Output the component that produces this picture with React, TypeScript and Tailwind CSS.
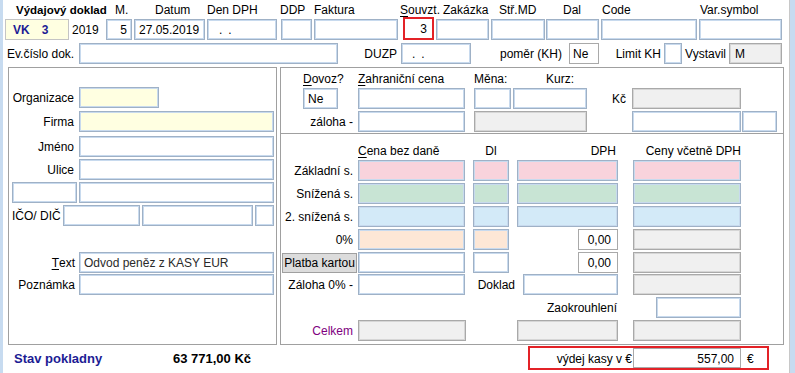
import type { ReactNode } from 'react';

const edge = 'border border-[#9fb1c6] shadow-[inset_0_0_0_1px_#c8daee]';

const tones = {
  input: `bg-white ${edge}`,
  yellow: `bg-[#ffffe1] ${edge}`,
  pink: `bg-[#f9d3dc] ${edge}`,
  green: `bg-[#c8e4d4] ${edge}`,
  sky: `bg-[#d3eaf8] ${edge}`,
  peach: `bg-[#fde7d6] ${edge}`,
  gray: 'bg-[#f0f0f0] border border-[#a9a9a9] shadow-[inset_0_0_0_1px_#d6d6d6]',
  plain: 'bg-white border border-[#a9a9a9]',
  vk: 'bg-[#ffffe1] border border-[#c4c4c4]',
};

function Box({
  className = '',
  tone = 'input',
  h = 'h-[21px]',
  children,
}: {
  className?: string;
  tone?: keyof typeof tones;
  h?: string;
  children?: ReactNode;
}) {
  return (
    <div className={`flex shrink-0 items-center whitespace-nowrap pt-[1px] ${h} ${tones[tone]} ${className}`}>
      {children}
    </div>
  );
}

function Label({ className = '', children }: { className?: string; children?: ReactNode }) {
  return <div className={`flex h-full shrink-0 items-center whitespace-nowrap pt-[1px] ${className}`}>{children}</div>;
}

function Row({ className = '', children }: { className?: string; children?: ReactNode }) {
  return <div className={`flex h-[21px] shrink-0 items-center ${className}`}>{children}</div>;
}

export default function App() {
  return (
    <div className="flex h-[373px] w-[795px] overflow-hidden bg-white font-['Liberation_Sans',Arial,sans-serif] text-[12px] leading-[14px] text-black">
      <div className="w-[3px] shrink-0 bg-[#c7dbf0]" />

      <div className="flex w-[786px] shrink-0 flex-col pt-[3px]">
        {/* header labels */}
        <div className="flex h-[14px] shrink-0 items-center whitespace-nowrap">
          <span className="ml-[13px] w-[99px] shrink-0 text-[11.5px] font-bold">Výdajový doklad</span>
          <span className="w-[40px] shrink-0">M.</span>
          <span className="w-[52px] shrink-0">Datum</span>
          <span className="w-[73px] shrink-0">Den DPH</span>
          <span className="w-[34px] shrink-0">DDP</span>
          <span className="w-[86px] shrink-0">Faktura</span>
          <span className="w-[43px] shrink-0">
            <u className="underline-offset-2">S</u>ouvzt.
          </span>
          <span className="w-[56px] shrink-0">Zakázka</span>
          <span className="w-[64px] shrink-0">Stř.MD</span>
          <span className="w-[39px] shrink-0">Dal</span>
          <span className="w-[98px] shrink-0">Code</span>
          <span className="shrink-0">Var.symbol</span>
        </div>

        {/* header inputs */}
        <div className="mt-[2px] flex h-[21px] shrink-0 items-start">
          <Box tone="vk" className="ml-[2px] w-[64px] font-bold text-[#1c1c94]">
            <span className="ml-[7px]">VK</span>
            <span className="ml-[12px]">3</span>
          </Box>
          <Label className="w-[37px] pl-[3px]">2019</Label>
          <Box className="w-[26px] justify-end pr-[4px]">5</Box>
          <Box className="ml-[2px] w-[71px] pl-[4px]">27.05.2019</Box>
          <Box className="ml-[2px] w-[70px]">
            <span className="ml-[11px]">.</span>
            <span className="ml-[6px]">.</span>
          </Box>
          <Box className="ml-[4px] w-[31px]" />
          <Box className="ml-[2px] w-[84px]" />
          <div className="-mt-[2px] ml-[5px] flex h-[23px] w-[31px] shrink-0 items-center justify-end border-2 border-[#e32227] bg-white pr-[5px] pt-[1px]">
            3
          </div>
          <Box className="ml-[2px] w-[53px]" />
          <Box className="ml-[2px] w-[54px]" />
          <Box className="ml-[1px] w-[53px]" />
          <Box className="ml-[2px] w-[96px]" />
          <Box className="ml-[2px] w-[83px]" />
        </div>

        {/* second header line */}
        <Row className="mt-[3px]">
          <Label className="w-[76px] pl-[4px]">Ev.číslo dok.</Label>
          <Box className="w-[259px]" />
          <Label className="w-[63px] justify-end pr-[4px]">DUZP</Label>
          <Box className="w-[70px]">
            <span className="ml-[10px]">.</span>
            <span className="ml-[6px]">.</span>
          </Box>
          <Label className="w-[98px] justify-end pr-[7px]">poměr (KH)</Label>
          <Box tone="plain" className="w-[30px] pl-[3px]">
            Ne
          </Box>
          <Label className="w-[65px] justify-end pr-[3px]">Limit KH</Label>
          <Box className="w-[18px]" />
          <Label className="w-[47px] justify-end pr-[3px]">Vystavil</Label>
          <Box tone="gray" className="w-[53px] pl-[5px]">
            M
          </Box>
        </Row>

        {/* panels */}
        <div className="mt-[3px] flex h-[278px] shrink-0">
          {/* partner */}
          <div className="ml-[5px] flex w-[269px] shrink-0 flex-col border border-[#a0a0a0]">
            <Row className="mt-[19px]">
              <Label className="w-[70px] justify-end pr-[5px]">Organizace</Label>
              <Box tone="yellow" className="w-[80px]" />
            </Row>
            <Row className="mt-[3px]">
              <Label className="w-[70px] justify-end pr-[5px]">Firma</Label>
              <Box tone="yellow" className="w-[195px]" />
            </Row>
            <Row className="mt-[4px]">
              <Label className="w-[70px] justify-end pr-[5px]">Jméno</Label>
              <Box className="w-[195px]" />
            </Row>
            <Row className="mt-[2px]">
              <Label className="w-[70px] justify-end pr-[5px]">Ulice</Label>
              <Box className="w-[195px]" />
            </Row>
            <Row className="mt-[2px]">
              <Box className="ml-[3px] w-[65px]" />
              <Box className="ml-[2px] w-[195px]" />
            </Row>
            <Row className="mt-[2px]">
              <Label className="ml-[3px] w-[51px]">IČO/ DIČ</Label>
              <Box className="w-[77px]" />
              <Box className="ml-[2px] w-[111px]" />
              <Box className="ml-[2px] w-[19px]" />
            </Row>
            <Row className="mt-[26px]">
              <Label className="w-[70px] justify-end pr-[4px]">
                <u className="underline-offset-2">T</u>ext
              </Label>
              <Box className="w-[195px] pl-[4px] text-[#2a2a2a]">Odvod peněz z KASY EUR</Box>
            </Row>
            <Row className="mt-[1px]">
              <Label className="w-[70px] justify-end pr-[4px]">Poznámka</Label>
              <Box className="w-[195px]" />
            </Row>
          </div>

          {/* amounts */}
          <div className="ml-[3px] flex w-[504px] shrink-0 flex-col border border-[#a0a0a0]">
            <div className="flex h-[66px] shrink-0 flex-col border-b border-[#a0a0a0]">
              <div className="mt-[4px] flex h-[14px] shrink-0 items-center whitespace-nowrap">
                <span className="ml-[22px] w-[55px] shrink-0">
                  <u className="underline-offset-2">D</u>ovoz?
                </span>
                <span className="w-[116px] shrink-0">
                  <u className="underline-offset-2">Z</u>ahraniční cena
                </span>
                <span className="w-[72px] shrink-0">Měna:</span>
                <span className="shrink-0">Kurz:</span>
              </div>
              <Row className="mt-[2px]">
                <Box className="ml-[22px] w-[35px] pl-[4px]">Ne</Box>
                <Box className="ml-[20px] w-[107px]" />
                <Box className="ml-[9px] w-[37px]" />
                <Box className="ml-[2px] w-[74px]" />
                <Label className="w-[45px] justify-end pr-[6px]">Kč</Label>
                <Box tone="gray" className="w-[109px]" />
              </Row>
              <Row className="mt-[2px]">
                <Label className="w-[77px] justify-end pr-[5px]">záloha -</Label>
                <Box className="w-[107px]" />
                <Box tone="gray" className="ml-[9px] w-[113px]" />
                <Box className="ml-[45px] w-[109px]" />
                <Box className="ml-[1px] w-[35px]" />
              </Row>
            </div>

            <div className="mt-[10px] flex h-[14px] shrink-0 items-center whitespace-nowrap">
              <span className="ml-[77px] w-[115px] shrink-0">
                <u className="underline-offset-2">C</u>ena bez daně
              </span>
              <span className="w-[36px] shrink-0 text-center">Dl</span>
              <span className="ml-[8px] w-[99px] shrink-0 text-right">DPH</span>
              <span className="ml-[17px] w-[108px] shrink-0 text-right">Ceny včetně DPH</span>
            </div>

            <Row className="mt-[2px]">
              <Label className="w-[77px] justify-end pr-[5px]">Základní s.</Label>
              <Box tone="pink" className="w-[107px]" />
              <Box tone="pink" className="ml-[8px] w-[36px]" />
              <Box tone="pink" className="ml-[8px] w-[101px]" />
              <Box tone="pink" className="ml-[15px] w-[108px]" />
            </Row>
            <Row className="mt-[2px]">
              <Label className="w-[77px] justify-end pr-[5px]">Snížená s.</Label>
              <Box tone="green" className="w-[107px]" />
              <Box tone="green" className="ml-[8px] w-[36px]" />
              <Box tone="green" className="ml-[8px] w-[101px]" />
              <Box tone="green" className="ml-[15px] w-[108px]" />
            </Row>
            <Row className="mt-[2px]">
              <Label className="w-[77px] justify-end pr-[5px]">2. snížená s.</Label>
              <Box tone="sky" className="w-[107px]" />
              <Box tone="sky" className="ml-[8px] w-[36px]" />
              <Box tone="sky" className="ml-[8px] w-[101px]" />
              <Box tone="sky" className="ml-[15px] w-[108px]" />
            </Row>
            <Row className="mt-[2px]">
              <Label className="w-[77px] justify-end pr-[5px]">0%</Label>
              <Box tone="peach" className="w-[107px]" />
              <Box tone="peach" className="ml-[8px] w-[36px]" />
              <Box tone="plain" className="ml-[69px] w-[40px] justify-end pr-[6px]">
                0,00
              </Box>
              <Box tone="gray" className="ml-[15px] w-[108px]" />
            </Row>
            <Row className="mt-[2px]">
              <div className="flex h-full w-[77px] shrink-0 items-center">
                <button className="ml-[1px] flex h-[20px] w-[75px] items-center justify-center whitespace-nowrap border border-[#a0a0a0] bg-[#dcdcdc] pt-[1px] text-[12px] leading-[14px]">
                  Platba kartou
                </button>
              </div>
              <Box className="w-[107px]" />
              <Box className="ml-[8px] w-[36px]" />
              <Box tone="plain" className="ml-[69px] w-[40px] justify-end pr-[6px]">
                0,00
              </Box>
              <Box tone="gray" className="ml-[15px] w-[108px]" />
            </Row>
            <Row className="mt-[1px]">
              <Label className="w-[77px] justify-end pr-[5px]">Záloha 0% -</Label>
              <Box className="w-[107px]" />
              <Label className="w-[58px] justify-end pr-[8px]">Doklad</Label>
              <Box className="w-[95px]" />
              <Box tone="gray" className="ml-[15px] w-[108px]" />
            </Row>
            <Row className="mt-[2px]">
              <Label className="w-[337px] justify-end pr-[1px]">Zaokrouhlení</Label>
              <Box className="ml-[38px] w-[85px]" />
            </Row>
            <Row className="mt-[2px]">
              <Label className="w-[77px] justify-end pr-[5px] text-[#800080]">Celkem</Label>
              <Box tone="gray" className="w-[108px]" />
              <Box tone="gray" className="ml-[51px] w-[101px]" />
              <Box tone="gray" className="ml-[15px] w-[108px]" />
            </Row>
          </div>
        </div>

        {/* footer */}
        <div className="mt-[1px] flex h-[24px] shrink-0 items-center whitespace-nowrap">
          <span className="ml-[11px] w-[159px] shrink-0 pt-[1px] text-[13px] font-bold text-[#1c1c94]">Stav pokladny</span>
          <span className="w-[355px] shrink-0 pt-[1px] text-[13px] font-bold">63 771,00 Kč</span>
          <div className="flex h-[24px] w-[241px] shrink-0 border-2 border-[#e32227]">
            <Label className="w-[103px] justify-end pr-[1px]">výdej kasy v €</Label>
            <Box tone="plain" h="h-[20px]" className="w-[108px] justify-end pr-[6px]">
              557,00
            </Box>
            <Label className="pl-[6px]">€</Label>
          </div>
        </div>
      </div>

      <div className="w-[1px] shrink-0 bg-[#c8c8c8]" />
      <div className="flex-1 bg-[#c7dbf0]" />
    </div>
  );
}
